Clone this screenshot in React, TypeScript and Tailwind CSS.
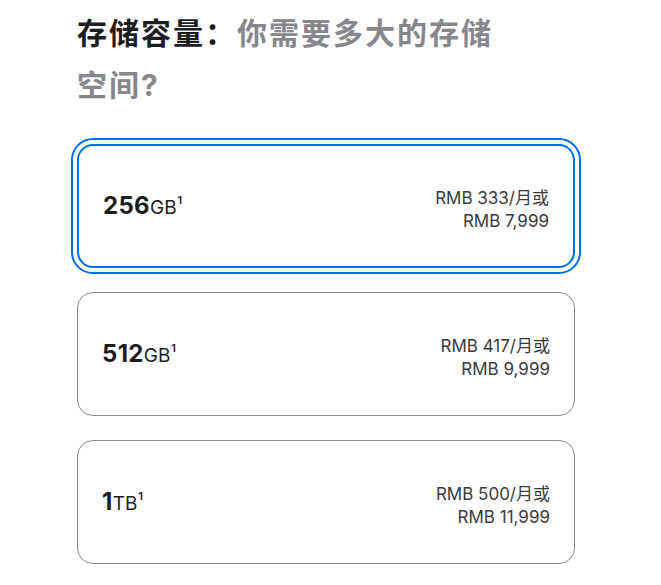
import React from "react";

type Option = {
  size: string;
  unit: string;
  monthly: string;
  total: string;
  selected?: boolean;
};

const options: Option[] = [
  { size: "256", unit: "GB", monthly: "RMB 333/月或", total: "RMB 7,999", selected: true },
  { size: "512", unit: "GB", monthly: "RMB 417/月或", total: "RMB 9,999" },
  { size: "1", unit: "TB", monthly: "RMB 500/月或", total: "RMB 11,999" },
];

const font = { fontFamily: 'Inter, "Noto Sans CJK SC", sans-serif' };

function StorageCard({ option }: { option: Option }) {
  const base =
    "flex h-[124px] items-center justify-between rounded-[16px] bg-white pl-[24px] pr-[24px]";
  const state = option.selected
    ? "border-2 border-[#0071e3] outline-[2.5px] outline-solid outline-[#0071e3] outline-offset-[4px]"
    : "border border-[#8a8a8e]";
  return (
    <div className={`${base} ${state}`}>
      <div className="flex items-start text-[#1d1d1f]">
        <span className="text-[24px] font-bold leading-none tracking-[0.3px]">{option.size}</span>
        <span className="text-[19px] leading-none mt-[4px]">{option.unit}</span>
        <sup className="top-0 text-[11px] font-semibold leading-none mt-[1px] ml-[1px]">1</sup>
      </div>
      <div className="pt-[7px] text-right text-[17px] leading-[23px] text-[#3a3a3c]">
        <div>{option.monthly}</div>
        <div>{option.total}</div>
      </div>
    </div>
  );
}

export default function App() {
  return (
    <div className="min-h-[585px] bg-white" style={font}>
      <div className="ml-[77px] w-[498px] pt-[7px]">
        <h2 className="max-w-[440px] text-[30px] font-bold leading-[52px] tracking-[2px] text-[#86868b]">
          <span className="text-[#1d1d1f]">存储容量：</span>
          你需要多大的存储空间?
        </h2>
        <div className="mt-[33px] flex flex-col gap-[24px]">
          {options.map((o) => (
            <StorageCard key={o.size + o.unit} option={o} />
          ))}
        </div>
      </div>
    </div>
  );
}
